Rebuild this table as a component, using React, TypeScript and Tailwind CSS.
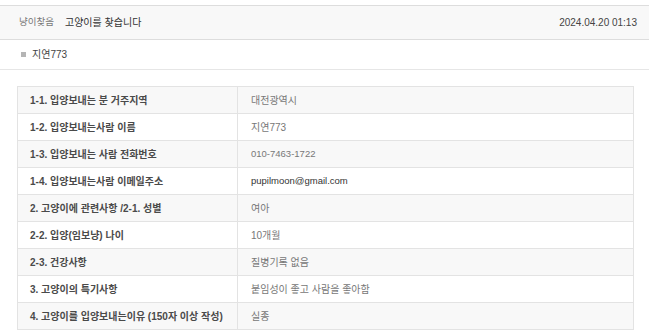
import React from "react";

const rows: { label: string; value: string; latin?: boolean; dark?: boolean }[] = [
  { label: "1-1. 입양보내는 분 거주지역", value: "대전광역시" },
  { label: "1-2. 입양보내는사람 이름", value: "지연773" },
  { label: "1-3. 입양보내는 사람 전화번호", value: "010-7463-1722", latin: true },
  { label: "1-4. 입양보내는사람 이메일주소", value: "pupilmoon@gmail.com", latin: true, dark: true },
  { label: "2. 고양이에 관련사항 /2-1. 성별", value: "여아" },
  { label: "2-2. 입양(임보냥) 나이", value: "10개월" },
  { label: "2-3. 건강사항", value: "질병기록 없음" },
  { label: "3. 고양이의 특기사항", value: "붙임성이 좋고 사람을 좋아함" },
  { label: "4. 고양이를 입양보내는이유 (150자 이상 작성)", value: "실종" },
];

export default function App() {
  return (
    <div className="w-[649px] h-[334px] bg-white overflow-hidden font-['Liberation_Sans','Noto_Sans_CJK_KR',sans-serif]">
      <div className="mt-[5px] h-[35px] border-t border-b border-[#dddddd] bg-[#f8f8f8] flex items-center justify-between pl-[19px] pr-[12px]">
        <div className="flex items-center">
          <span className="text-[9.5px] text-[#777]">냥이찾음</span>
          <span className="ml-[11px] text-[10px] text-[#333]">고양이를 찾습니다</span>
        </div>
        <span className="text-[10px] text-[#444]">2024.04.20 01:13</span>
      </div>
      <div className="h-[30px] border-b border-[#e6e6e6] flex items-center pl-[21px]">
        <span className="w-[5px] h-[5px] bg-[#b5b5b5] mr-[6px]" />
        <span className="text-[10px] text-[#444]">지연773</span>
      </div>
      <div className="mt-[16px] ml-[17px] mr-[15px] border border-b-0 border-[#e3e3e3]">
        {rows.map((r, i) => (
          <div
            key={i}
            className={`flex h-[27px] border-b border-[#e3e3e3] ${i % 2 === 0 ? "bg-[#f8f8f8]" : "bg-white"}`}
          >
            <div className="w-[220px] shrink-0 border-r border-[#e3e3e3] flex items-center pl-[12px] text-[10px] font-bold text-[#4a4a4a]">
              {r.label}
            </div>
            <div
              className={`flex-1 flex items-center pl-[13px] ${r.latin ? "text-[9.5px]" : "text-[10px]"} ${r.dark ? "text-[#333]" : "text-[#777]"}`}
            >
              {r.value}
            </div>
          </div>
        ))}
      </div>
    </div>
  );
}
